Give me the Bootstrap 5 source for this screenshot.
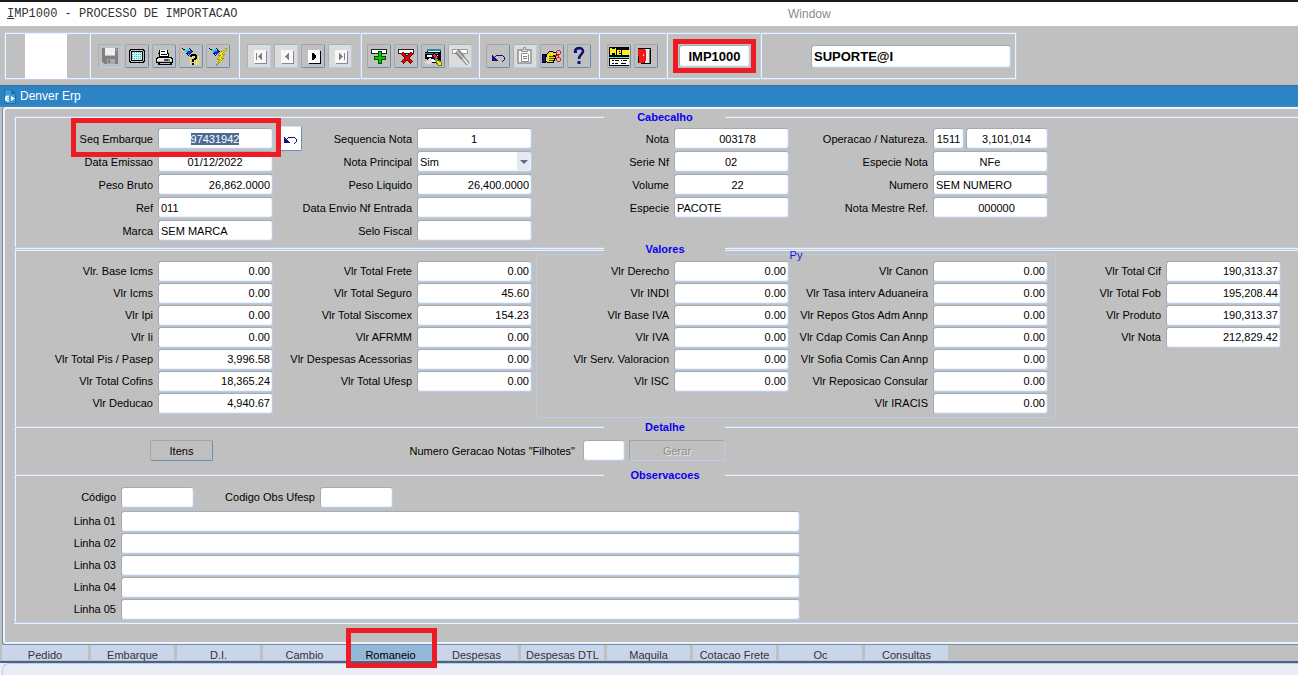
<!DOCTYPE html>
<html lang="pt-BR">
<head>
<meta charset="utf-8">
<meta name="viewport" content="width=device-width, initial-scale=1">
<title>IMP1000 - PROCESSO DE IMPORTACAO</title>
<link rel="stylesheet" href="https://cdn.jsdelivr.net/npm/bootstrap@5.3.0/dist/css/bootstrap.min.css">
<style>
:root{--face:#c0c0c0;--line:#b9cde6;--hi:#eef3fa;--edge:#6c8db3;--red:#ed1c24}
body{font:11px/14px "Liberation Sans",Arial,sans-serif;color:#000;background:#e8edf6}
.app{background:var(--face)}
.menubar{border-top:2px solid #1c1a1b;background:#fff;display:grid;grid-template-columns:781fr 510fr;height:26px;padding-left:7px;align-items:center}
.menubar a{font-size:12px;color:#8a8a8a;text-decoration:none}
.menubar a.prog{font:12px/14px "Liberation Mono",monospace;color:#333}
.tools{margin:6px 0 0 4px;height:48px;border:1px solid var(--line);box-shadow:inset 1px 1px 0 var(--hi),inset -1px -1px 0 var(--hi);width:1013px;max-width:100%}
.grp{border-right:1px solid var(--line);box-shadow:1px 0 0 var(--hi);display:flex;align-items:center;gap:3px;padding:0 8px}
.grp-logo{padding:0 22px 0 20px}
.grp-rec{padding:0 6px}
.grp-edit{padding:0 7px}
.grp-prog{padding:0 10px 0 12px}
.grp-user{padding:0 5px 0 0;border:0;box-shadow:none}
.tb{width:24px;height:24px;padding:0;border:1px solid;border-color:#a6a6a6 var(--edge) var(--edge) #a6a6a6;border-radius:2px;background:var(--face);display:block}
.tb:disabled{border-color:#a9b0ba var(--line) var(--line) #a9b0ba}
.tb:disabled.pale{background:#dcdcdc}
.tb svg{display:block;width:22px;height:22px}
.logo{width:42px;height:45px;background:#fff}
.titlebar{margin-top:5px;height:22px;background:#2c84c4;border-top:1px solid #3c6c9c;border-bottom:1px solid #4f86b8;color:#fff;font-size:12px;padding-left:4px}
.panel-form{margin-left:2px;border-left:1px solid var(--edge);box-shadow:inset 2px 2px 0 var(--hi),inset 0 -2px 0 var(--hi);border-bottom:1px solid var(--edge);border-radius:3px 0 0 3px;padding:9px 0 21px 11px}
.frame{border-left:1px solid var(--line);box-shadow:inset 1px 0 0 var(--hi),0 1px 0 var(--hi);border-bottom:1px solid var(--line)}
.sec-head{display:grid;grid-template-columns:590fr 121px 573fr;align-items:center;height:14px;margin:-6px 0}
.sec-head i{height:2px;background:linear-gradient(var(--line) 50%,var(--hi) 50%)}
.sec-head.two i{height:4px;background:linear-gradient(var(--line) 25%,var(--hi) 25% 50%,var(--line) 50% 75%,var(--hi) 75%)}
.sec-head.two{margin:-5px 0}
.sec-head h2{font:bold 11px/14px "Liberation Sans",Arial,sans-serif;color:#0a00f0;text-align:center;margin:0;background:var(--face);position:relative;z-index:1}
.cab{display:grid;grid-template-columns:258fr 259fr 257fr 259fr 250fr;padding:9px 0 5px;--row:23px}
.val{display:grid;grid-template-columns:258fr 263fr 520fr 225fr 17fr;padding:3px 0 8px;--row:22px}
.val .stack{padding-top:6px}
.val .second{padding-right:4px}
.py{display:grid;grid-template-columns:252fr 259fr;border:1px solid var(--line);border-radius:5px;padding:0 7px 3px 0;position:relative;margin:0}
.py .stack{padding-top:5px}
.py legend{position:absolute;top:-7px;left:0;right:0;margin:auto;float:none;width:14px;padding:0;background:linear-gradient(transparent 50%,var(--face) 50%);font-size:11px;line-height:14px;color:#1a10e0;text-align:center;z-index:2}
.fld{height:var(--row);display:flex;justify-content:flex-end;align-items:center;gap:5px;white-space:nowrap;position:relative}
.tx{width:115px;height:21px;border:1px solid var(--line);border-top-color:#a3abb8;border-left-color:#a3abb8;box-shadow:inset -1px -1px 0 var(--hi);border-radius:3px;background-color:#fff;padding:0 3px 0 2px;font:11px/14px "Liberation Sans",Arial,sans-serif;color:#000;outline:0}
.num{text-align:right;padding:0 2px}
.mid{text-align:center}
.mask{text-align:center;padding-left:15px}
.tx::selection{background:#4b6a95;color:#fff}
select.tx{appearance:none;background:#fff url("data:image/svg+xml,%3Csvg xmlns='http://www.w3.org/2000/svg' width='14' height='19'%3E%3Cpath fill='%23e4eaf4' d='M0 0h14v19H0z'/%3E%3Cpath fill='%23646c84' d='M3 8h8L7 12z'/%3E%3C/svg%3E") right center no-repeat}
.pair{display:flex;gap:2px}
.w-op{width:31px;padding:0 2px}
.w-nat{width:82px}
.w-ger{width:42px}
.w-cod{width:73px}
.undo{width:23px;height:25px;margin:0 auto 0 6px;background:#fff;border-color:#d8dde4 var(--edge) var(--edge) #d8dde4}
.ring{position:absolute;border:5px solid var(--red);pointer-events:none;z-index:3}
.ring-seq{right:-8px;width:210px;top:-9px;height:39px}
.ring-prog{inset:-6px}
.ring-tab{inset:-17px -5px -8px -3px}
.det{display:grid;grid-template-columns:198fr 412fr 673fr;padding:12px 0 13px;align-items:center}
.bt{height:21px;padding:0;font:11px/14px "Liberation Sans",Arial,sans-serif;border:1px solid;border-color:#a6a6a6 var(--edge) var(--edge) #a6a6a6;border-radius:2px;background:var(--face);width:63px}
.bt-wide{width:96px}
.bt:disabled{color:#8e8e8e;border-color:#a3a3a3 var(--line) var(--line) #a3a3a3;text-shadow:1px 1px 0 #e6e6e6}
.obs{display:grid;grid-template-columns:785fr 498fr;padding:10px 0 2px;--row:22px}
.obs .fld{justify-content:flex-start}
.obs .codes{margin-bottom:2px}
.obs label{width:101px;text-align:right}
.obs label.wide-l{width:116px}
.tabs{height:16px;padding-left:2px;gap:3px}
.tabs a{width:83px;height:15px;background:#c9d6e9;color:#333;text-align:center;text-decoration:none;font-size:11px;line-height:20px;position:relative;white-space:nowrap}
.tabs a:first-child{width:86px}
.tabs a.on{background:#93b7d9;color:#000}
.foot{height:14px;border-top:2px solid #44648e;background:#e8edf6}
.foot div{height:12px;margin-left:2px;border:1px solid #bccfe6;border-width:1px 0 0 1px;border-radius:7px 0 0 0}
.cmd{width:71px;height:22px;padding:0;font-size:13px;font-weight:bold}
.usr{width:200px;height:23px;font-size:13px;font-weight:bold}
</style>
</head>
<body>
<div class="app">
<nav class="menubar"><a class="prog" href="#"><u>I</u>MP1000 - PROCESSO DE IMPORTACAO</a><a href="#">Window</a></nav>

<div class="tools d-flex" role="toolbar">
 <div class="grp grp-logo"><div class="logo"></div></div>
 <div class="grp">
  <button class="tb" disabled aria-label="Salvar"><svg viewBox="0 0 22 22" shape-rendering="crispEdges"><path fill="#808080" d="M3 3h16v16H5l-2-2z"/><path fill="#efefef" d="M6 3h10v8H6z"/><path fill="#c0c0c0" d="M6 10h10v1H6zM17 4h1v2h-1z"/><path fill="#a8a8a8" d="M8 14h8v5H8z"/><path fill="#777" d="M9 15h2v3H9z"/></svg></button>
  <button class="tb" aria-label="Tela"><svg viewBox="0 0 22 22" shape-rendering="crispEdges"><path d="M4 4h14v1h1v12h-1v1H4v-1H3V5h1z"/><path fill="#c0c0c0" d="M5 5h12v1h1v10h-1v1H5v-1H4V6h1z"/><path d="M5 6h12v10H5z"/><path fill="#c8f4f4" d="M6 7h10v8H6z"/><path stroke="#58c0c8" stroke-dasharray="1 1" d="M6 7.500h10M6 9.500h10M6 11.500h10M6 13.500h10"/></svg></button>
  <button class="tb" aria-label="Imprimir"><svg viewBox="0 0 22 22" shape-rendering="crispEdges"><path d="M6 5h9v3h1v4H6V9H5V8h1z"/><path fill="#fff" d="M7 5h7v4h1v2H7z"/><path d="M8 6h4v1H8zM8 9h6v1H8z"/><path d="M4 12h15v1h1v5H3v-5h1zM5 18h2v1h10v-1h2v2H5z"/><path fill="#e8e8e8" d="M5 13h13v1H5zM4 14h15v2H4z"/><path fill="#b0b0b0" d="M4 16h15v1H4z"/><path fill="#e02020" d="M11 14h2v2h-2z"/><path fill="#20c020" d="M15 14h2v2h-2z"/><path fill="#2030e0" d="M13 14h2v2h-2z"/></svg></button>
  <button class="tb" aria-label="Consultar"><svg viewBox="0 0 22 22" shape-rendering="crispEdges"><path stroke="#ffee40" stroke-width="9" stroke-dasharray="1 1" d="M10 15.500h10"/><path fill="none" stroke="#000" d="M2.500 3.500l4 3 3-3 3 3-4 4-3-4"/><path fill="#10d8f0" d="M4 5l5-1-1 4H6z"/><path fill="#1030d0" d="M7 7l4-2 1 2-3 3z"/><path d="M11 9h5v1h1v4h-1v1h-2v2h-2v-3h2v-1h1v-2h-3v1h-2v-2h1zM12 18h2v2h-2z"/></svg></button>
  <button class="tb" aria-label="Executar consulta"><svg viewBox="0 0 22 22" shape-rendering="crispEdges"><path fill="none" stroke="#000" d="M2.500 3.500l4 3 3-3 3 3-4 4-3-4"/><path fill="#10d8f0" d="M4 5l5-1-1 4H6z"/><path fill="#1030d0" d="M7 7l4-2 1 2-3 3z"/><path fill="#ffed00" stroke="#7c7200" stroke-width=".6" d="M19 3l-8 7h3l-4 4h3l-4 7 8-8h-3l4-4h-3l5-5z"/></svg></button>
 </div>
 <div class="grp">
  <button class="tb pale" disabled aria-label="Primeiro"><svg viewBox="0 0 22 22" shape-rendering="crispEdges"><path fill="#8a8a8a" d="M7 6h12v13H7z"/><path fill="#f8f8f8" d="M6 5h12v13H6z"/><path fill="#808080" d="M8 8h1v7H8zM14 8v7l-4-3v-1z"/></svg></button>
  <button class="tb pale" disabled aria-label="Anterior"><svg viewBox="0 0 22 22" shape-rendering="crispEdges"><path fill="#8a8a8a" d="M7 6h12v13H7z"/><path fill="#f8f8f8" d="M6 5h12v13H6z"/><path fill="#808080" d="M14 8v7l-4-3v-1z"/></svg></button>
  <button class="tb" aria-label="Proximo"><svg viewBox="0 0 22 22" shape-rendering="crispEdges"><path d="M7 6h12v13H7z"/><path fill="#fff" d="M6 5h12v13H6z"/><path d="M10 8v7h2v-1h1v-1h1v-3h-1V9h-1V8z"/></svg></button>
  <button class="tb pale" disabled aria-label="Ultimo"><svg viewBox="0 0 22 22" shape-rendering="crispEdges"><path fill="#8a8a8a" d="M7 6h12v13H7z"/><path fill="#f8f8f8" d="M6 5h12v13H6z"/><path fill="#808080" d="M15 8h1v7h-1zM10 8v7l4-3v-1z"/></svg></button>
 </div>
 <div class="grp grp-rec">
  <button class="tb" aria-label="Inserir"><svg viewBox="0 0 22 22" shape-rendering="crispEdges"><path fill="#fff" stroke="#222" d="M3.500 4.500h15v4h-15z"/><path fill="#00d000" stroke="#004c00" d="M10.500 6.500h3v5h4v3h-4v4h-3v-4h-4v-3h4z"/></svg></button>
  <button class="tb" aria-label="Remover"><svg viewBox="0 0 22 22" shape-rendering="crispEdges"><path fill="#fff" stroke="#222" d="M3.500 4.500h15v4h-15z"/><path fill="none" stroke="#600" stroke-width="4" d="M7 8l10 10M17 8L7 18"/><path fill="none" stroke="#d00808" stroke-width="2" d="M7 8l10 10M17 8L7 18"/></svg></button>
  <button class="tb" aria-label="Limpar"><svg viewBox="0 0 22 22" shape-rendering="crispEdges"><path d="M5 4h14v12h-2v2H5v-4H3V7h2z"/><path fill="#2a8c98" d="M5 4h14v2H5zM3 8h13v1H3z"/><path fill="#fff" d="M6 6h12v1H6zM5 10h11v2H5zM9 14h6v3H9z"/><path fill="#ddd" d="M3 18l5-6 2 5-1 3z"/><path fill="#e020b0" stroke="#000" d="M9.500 9.500l3-1 4 4-2 4z"/><path fill="#f02020" d="M12 10h2v3h-2z"/><path fill="#30c060" d="M13 14h3v2h-3z"/><path fill="#f4ec20" stroke="#706c00" d="M16 15l3 2v3h-3l-2-3z"/></svg></button>
  <button class="tb pale" disabled aria-label="Limpar registro"><svg viewBox="0 0 22 22"><path fill="#fff" stroke="#999" d="M3.500 4.500h15v4h-15z"/><path stroke="#808080" stroke-width="5" d="M8 6l6 7"/><path stroke="#bbb" stroke-width="2" d="M8 6l6 7"/><path stroke="#777" stroke-width="4" d="M14 13l5 6"/><path stroke="#e8e8e8" stroke-width="2" d="M14 13l5 6"/></svg></button>
 </div>
 <div class="grp grp-edit">
  <button class="tb" aria-label="Desfazer"><svg viewBox="0 0 22 22" shape-rendering="crispEdges"><path fill="none" stroke="#101078" d="M7 13l3-3h5l2 2v3l-2 2"/><path fill="#101078" d="M5 10v6h6z"/></svg></button>
  <button class="tb pale" disabled aria-label="Colar"><svg viewBox="0 0 22 22"><path fill="#f4f4f4" stroke="#929292" stroke-width="1.500" d="M4 5h13v13H4z"/><path fill="#ddd" stroke="#929292" d="M7.500 6.500v-2h2v-2h2v2h2v2z"/><path fill="#fff" stroke="#929292" d="M7.500 8.500h6l1 1v7h-7z"/><path stroke="#808080" d="M9 11.500h4M9 13.500h4"/></svg></button>
  <button class="tb" aria-label="Lista"><svg viewBox="0 0 22 22" shape-rendering="crispEdges"><path fill="#1010c0" stroke="#000" d="M1.500 9.500h3v8h-3z"/><path fill="#f0e020" stroke="#000" d="M5.500 9.500l3-3h3l1 1h3v3h-3v1h2v2h-1v2h-1v2h-6l-2-2z"/><path stroke="#504800" d="M8 11.500h5M8 13.500h5M8 15.500h4"/><path fill="none" stroke="#e02020" d="M15.500 6.500l1-1h2l1 1v2l-1 1h-2l-1-1zM15.500 13.500l1-1h2l1 1v2l-1 1h-2l-1-1zM17.500 9v4M14 10.500h4"/></svg></button>
  <button class="tb" aria-label="Ajuda"><svg viewBox="0 0 22 22"><path fill="none" stroke="#10107c" stroke-width="2.600" d="M7 7c0-5 8-5 8-1 0 4-4 3-4 8"/><path fill="#10107c" d="M9.500 16h3v3h-3zM6 6h3v2H6z"/></svg></button>
 </div>
 <div class="grp">
  <button class="tb" aria-label="Menu"><svg viewBox="0 0 22 22" shape-rendering="crispEdges"><path d="M1 2h20v19H1z"/><path fill="none" stroke="#ffee20" stroke-width="1.500" d="M3 10V3M4 5h1v2h1V5h1M7.500 3v7M10 7.500h2.500v-2h-2.500v4H13M15 10V5.500h2V10M19 5v4.500h2V5"/><path fill="#50e8e8" d="M1 12h20v1H1z"/><path fill="#fff" d="M2 14h19v6H2z"/><path stroke="#000" d="M4 15.500h2M7 15.500h4M13 15.500h1M15 15.500h4M4 18.500h2M7 18.500h3M13 18.500h5"/></svg></button>
  <button class="tb" aria-label="Sair"><svg viewBox="0 0 22 22" shape-rendering="crispEdges"><path d="M3 3h13v16H6v-1H3z"/><path fill="#e8e8e8" d="M10 4h5v14h-5z"/><path fill="#f01818" d="M3 4h7l1 2v9l-3 3H4z"/><path fill="#ff0" d="M8 9h1v2H8z"/><path fill="#777" d="M14 5h1v13h-1z"/></svg></button>
 </div>
 <div class="grp grp-prog"><div class="position-relative"><input class="tx cmd mid d-block" value="IMP1000" aria-label="Programa"><span class="ring ring-prog"></span></div></div>
 <div class="grp grp-user flex-grow-1 justify-content-end"><input class="tx usr" value="SUPORTE@I" aria-label="Usuario"></div>
</div>

<header class="titlebar d-flex align-items-center gap-1"><svg width="12" height="16" viewBox="0 0 12 16"><path fill="#3d9ad4" stroke="#2070a8" d="M.5 1.500h7l4 4v10H.5z"/><path fill="#2070a8" d="M7 1v5h5z"/><path fill="none" stroke="#fff" stroke-width="1.500" d="M5 8.500a2.300 2.300 0 1 0 0 4M2 10.500h3"/><path fill="#fff" d="M7 8l4 2.500L7 13z"/></svg><span>Denver Erp</span></header>

<main>
<form class="panel-form" onsubmit="return false">
<div class="frame d-flex flex-column">
 <div class="sec-head"><i></i><h2>Cabecalho</h2><i></i></div>
 <section class="cab">
  <div class="stack">
   <div class="fld"><label for="seq">Seq Embarque</label><input class="tx mid" id="seq" value="97431942"><span class="ring ring-seq"></span></div>
   <div class="fld"><label for="dem">Data Emissao</label><input class="tx mid" id="dem" value="01/12/2022"></div>
   <div class="fld"><label for="pbr">Peso Bruto</label><input class="tx num" id="pbr" value="26,862.0000"></div>
   <div class="fld"><label for="ref">Ref</label><input class="tx" id="ref" value="011"></div>
   <div class="fld"><label for="mar">Marca</label><input class="tx" id="mar" value="SEM MARCA"></div>
  </div>
  <div class="stack">
   <div class="fld"><button type="button" class="tb undo" aria-label="Desfazer"><svg viewBox="0 0 22 22" shape-rendering="crispEdges"><path fill="none" stroke="#101078" d="M6 12l3-3h5l2 2v3l-2 2"/><path fill="#101078" d="M4 9v6h6z"/></svg></button><label for="sqn">Sequencia Nota</label><input class="tx mid" id="sqn" value="1"></div>
   <div class="fld"><label for="npr">Nota Principal</label><select class="tx" id="npr"><option>Sim</option><option>Nao</option></select></div>
   <div class="fld"><label for="plq">Peso Liquido</label><input class="tx num" id="plq" value="26,400.0000"></div>
   <div class="fld"><label for="den">Data Envio Nf Entrada</label><input class="tx" id="den"></div>
   <div class="fld"><label for="sfi">Selo Fiscal</label><input class="tx" id="sfi"></div>
  </div>
  <div class="stack">
   <div class="fld"><label for="not">Nota</label><input class="tx mask" id="not" value="003178"></div>
   <div class="fld"><label for="ser">Serie Nf</label><input class="tx mid" id="ser" value="02"></div>
   <div class="fld"><label for="vol">Volume</label><input class="tx mask" id="vol" value="22"></div>
   <div class="fld"><label for="esp">Especie</label><input class="tx" id="esp" value="PACOTE"></div>
  </div>
  <div class="stack">
   <div class="fld"><label for="ope">Operacao / Natureza.</label><div class="pair"><input class="tx mid w-op" id="ope" value="1511"><input class="tx mid w-nat" aria-label="Natureza" value="3,101,014"></div></div>
   <div class="fld"><label for="esn">Especie Nota</label><input class="tx mid" id="esn" value="NFe"></div>
   <div class="fld"><label for="nme">Numero</label><input class="tx" id="nme" value="SEM NUMERO"></div>
   <div class="fld"><label for="nmr">Nota Mestre Ref.</label><input class="tx mask" id="nmr" value="000000"></div>
  </div>
 </section>

 <div class="sec-head two"><i></i><h2>Valores</h2><i></i></div>
 <section class="val">
  <div class="stack">
   <div class="fld"><label for="v1">Vlr. Base Icms</label><input class="tx num" id="v1" value="0.00"></div>
   <div class="fld"><label for="v2">Vlr Icms</label><input class="tx num" id="v2" value="0.00"></div>
   <div class="fld"><label for="v3">Vlr Ipi</label><input class="tx num" id="v3" value="0.00"></div>
   <div class="fld"><label for="v4">Vlr Ii</label><input class="tx num" id="v4" value="0.00"></div>
   <div class="fld"><label for="v5">Vlr Total Pis / Pasep</label><input class="tx num" id="v5" value="3,996.58"></div>
   <div class="fld"><label for="v6">Vlr Total Cofins</label><input class="tx num" id="v6" value="18,365.24"></div>
   <div class="fld"><label for="v7">Vlr Deducao</label><input class="tx num" id="v7" value="4,940.67"></div>
  </div>
  <div class="stack second">
   <div class="fld"><label for="w1">Vlr Total Frete</label><input class="tx num" id="w1" value="0.00"></div>
   <div class="fld"><label for="w2">Vlr Total Seguro</label><input class="tx num" id="w2" value="45.60"></div>
   <div class="fld"><label for="w3">Vlr Total Siscomex</label><input class="tx num" id="w3" value="154.23"></div>
   <div class="fld"><label for="w4">Vlr AFRMM</label><input class="tx num" id="w4" value="0.00"></div>
   <div class="fld"><label for="w5">Vlr Despesas Acessorias</label><input class="tx num" id="w5" value="0.00"></div>
   <div class="fld"><label for="w6">Vlr Total Ufesp</label><input class="tx num" id="w6" value="0.00"></div>
  </div>
  <fieldset class="py"><legend>Py</legend>
   <div class="stack">
    <div class="fld"><label for="x1">Vlr Derecho</label><input class="tx num" id="x1" value="0.00"></div>
    <div class="fld"><label for="x2">Vlr INDI</label><input class="tx num" id="x2" value="0.00"></div>
    <div class="fld"><label for="x3">Vlr Base IVA</label><input class="tx num" id="x3" value="0.00"></div>
    <div class="fld"><label for="x4">Vlr IVA</label><input class="tx num" id="x4" value="0.00"></div>
    <div class="fld"><label for="x5">Vlr Serv. Valoracion</label><input class="tx num" id="x5" value="0.00"></div>
    <div class="fld"><label for="x6">Vlr ISC</label><input class="tx num" id="x6" value="0.00"></div>
   </div>
   <div class="stack">
    <div class="fld"><label for="y1">Vlr Canon</label><input class="tx num" id="y1" value="0.00"></div>
    <div class="fld"><label for="y2">Vlr Tasa interv Aduaneira</label><input class="tx num" id="y2" value="0.00"></div>
    <div class="fld"><label for="y3">Vlr Repos Gtos Adm Annp</label><input class="tx num" id="y3" value="0.00"></div>
    <div class="fld"><label for="y4">Vlr Cdap Comis Can Annp</label><input class="tx num" id="y4" value="0.00"></div>
    <div class="fld"><label for="y5">Vlr Sofia Comis Can Annp</label><input class="tx num" id="y5" value="0.00"></div>
    <div class="fld"><label for="y6">Vlr Reposicao Consular</label><input class="tx num" id="y6" value="0.00"></div>
    <div class="fld"><label for="y7">Vlr IRACIS</label><input class="tx num" id="y7" value="0.00"></div>
   </div>
  </fieldset>
  <div class="stack">
   <div class="fld"><label for="z1">Vlr Total Cif</label><input class="tx num" id="z1" value="190,313.37"></div>
   <div class="fld"><label for="z2">Vlr Total Fob</label><input class="tx num" id="z2" value="195,208.44"></div>
   <div class="fld"><label for="z3">Vlr Produto</label><input class="tx num" id="z3" value="190,313.37"></div>
   <div class="fld"><label for="z4">Vlr Nota</label><input class="tx num" id="z4" value="212,829.42"></div>
  </div>
 </section>

 <div class="sec-head"><i></i><h2>Detalhe</h2><i></i></div>
 <section class="det">
  <div class="text-end"><button type="button" class="bt">Itens</button></div>
  <div class="d-flex justify-content-end align-items-center gap-2"><label for="ger">Numero Geracao Notas "Filhotes"</label><input class="tx w-ger" id="ger"></div>
  <div class="ps-1"><button type="button" class="bt bt-wide" disabled>Gerar</button></div>
 </section>

 <div class="sec-head"><i></i><h2>Observacoes</h2><i></i></div>
 <section class="obs">
  <div>
   <div class="fld codes"><label for="cod">Código</label><input class="tx w-cod" id="cod"><label class="wide-l" for="cou">Codigo Obs Ufesp</label><input class="tx w-cod" id="cou"></div>
   <div class="fld"><label for="l1">Linha 01</label><input class="tx flex-grow-1" id="l1"></div>
   <div class="fld"><label for="l2">Linha 02</label><input class="tx flex-grow-1" id="l2"></div>
   <div class="fld"><label for="l3">Linha 03</label><input class="tx flex-grow-1" id="l3"></div>
   <div class="fld"><label for="l4">Linha 04</label><input class="tx flex-grow-1" id="l4"></div>
   <div class="fld"><label for="l5">Linha 05</label><input class="tx flex-grow-1" id="l5"></div>
  </div>
 </section>
</div>
</form>
</main>

<nav class="tabs d-flex">
 <a href="#">Pedido</a><a href="#">Embarque</a><a href="#">D.I.</a><a href="#">Cambio</a><a href="#" class="on">Romaneio<span class="ring ring-tab"></span></a><a href="#">Despesas</a><a href="#">Despesas DTL</a><a href="#">Maquila</a><a href="#">Cotacao Frete</a><a href="#">Oc</a><a href="#">Consultas</a>
</nav>
<footer class="foot"><div></div></footer>
</div>
<script src="https://cdn.jsdelivr.net/npm/bootstrap@5.3.0/dist/js/bootstrap.bundle.min.js"></script>
<script>
var seq = document.getElementById('seq');
seq.focus();
seq.select();
</script>
</body>
</html>
